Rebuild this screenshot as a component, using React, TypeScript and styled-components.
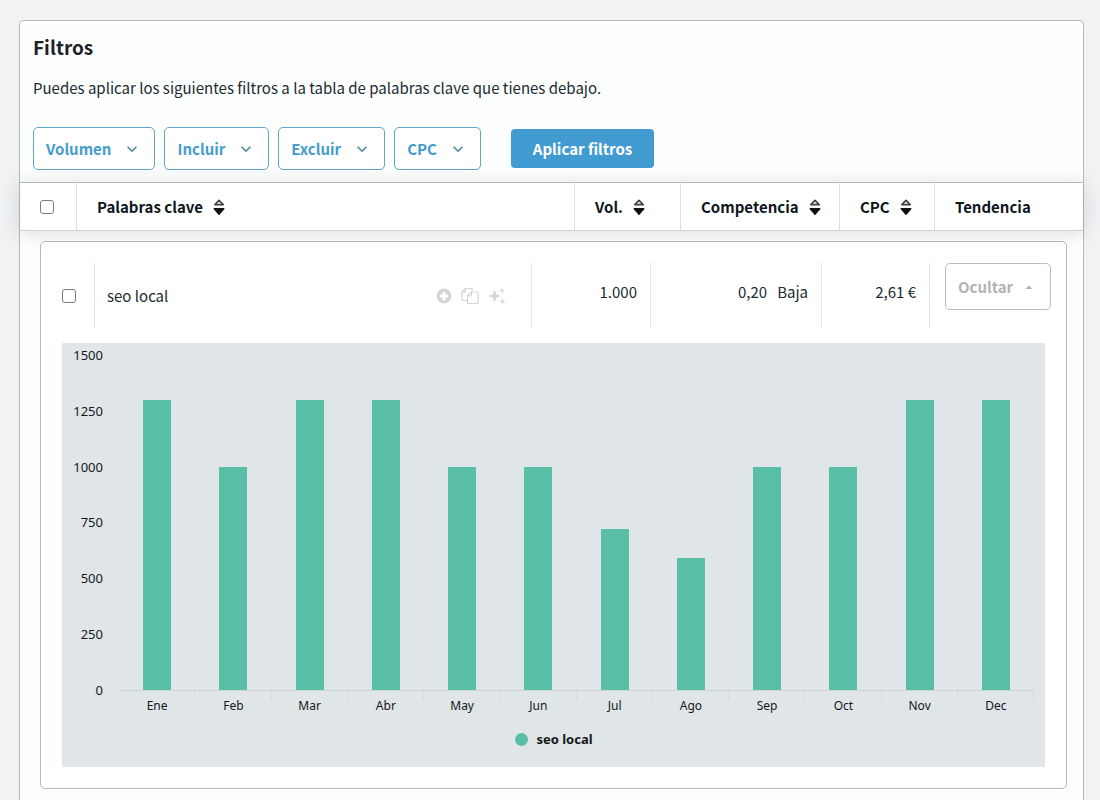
import React from "react";
import styled, { createGlobalStyle } from "styled-components";

const GlobalStyle = createGlobalStyle`
  *, *::before, *::after { box-sizing: border-box; }
  body {
    margin: 0;
    background: #f0f2f4;
    color: #202b31;
    font-family: "Noto Sans CJK SC", "Noto Sans", sans-serif;
    font-size: 15px;
    line-height: 24px;
  }
  button { font: inherit; cursor: pointer; }
`;

const Page = styled.main`
  display: flex;
  min-height: 100vh;
  padding: 20px 16px 0 19px;
`;

const Panel = styled.section`
  flex: 1;
  min-width: 0;
  background: #fdfefe;
  border: 1px solid #b4babd;
  border-bottom: 0;
  border-radius: 5px 5px 0 0;
`;

const Filters = styled.header`
  padding: 12px 13px;
`;

const Title = styled.h2`
  margin: 0;
  font-size: 19px;
  line-height: 28px;
  font-weight: 700;
  color: #1c2226;
`;

const Intro = styled.p`
  margin: 15px 0 27px;
`;

const FilterBar = styled.div`
  display: flex;
  flex-wrap: wrap;
  align-items: center;
  gap: 9px;
`;

const FilterButton = styled.button`
  display: flex;
  align-items: center;
  gap: 16px;
  height: 43px;
  padding: 0 17px 0 12px;
  border: 1px solid #62a5c8;
  border-radius: 5px;
  background: #fff;
  color: #459ccc;
  font-weight: 700;
`;

const ApplyButton = styled.button`
  height: 39px;
  margin-left: 21px;
  padding: 0 22px;
  border: 0;
  border-radius: 4px;
  background: #419bd0;
  color: #fff;
  font-weight: 700;
`;

const Keywords = styled.table`
  width: 100%;
  table-layout: fixed;
  border-collapse: separate;
  border-spacing: 0;
`;

const Head = styled.thead`
  position: relative;
  box-shadow: 0 2px 20px rgba(40, 50, 56, 0.16);
`;

const HeadCell = styled.th`
  height: 49px;
  padding: 0 0 0 20px;
  border-top: 1px solid #b4babd;
  border-bottom: 1px solid #cfd3d5;
  border-right: 1px solid #dde0e1;
  background: #fff;
  color: #0f171d;
  text-align: left;
  &:last-child { border-right: 0; }
`;

const SortButton = styled.button`
  display: flex;
  align-items: center;
  gap: 10px;
  padding: 0;
  border: 0;
  background: none;
  color: inherit;
  font-weight: 700;
`;

const Check = styled.input`
  appearance: none;
  display: block;
  width: 14px;
  height: 14px;
  margin: 0;
  border: 1px solid #767c80;
  border-radius: 3px;
  background: #fff;
  &:checked { background: #419bd0; }
`;

const CardCell = styled.td`
  padding: 10px 16px 10px 20px;
`;

const Card = styled.article`
  padding: 21px 15px 21px 21px;
  border: 1px solid #b4babd;
  border-radius: 5px;
  background: #fff;
`;

const Row = styled.tr`
  height: 65px;
`;

const Cell = styled.td`
  padding: 0;
  border-right: 1px solid #e6e9ea;
  vertical-align: middle;
`;

const NumberCell = styled(Cell)`
  padding: 17px 13px 0 0;
  text-align: right;
  vertical-align: top;
`;

const Level = styled.span`
  margin-left: 10px;
`;

const TrendCell = styled.td`
  padding: 0 0 0 15px;
  vertical-align: top;
`;

const KeywordLine = styled.div`
  display: flex;
  align-items: center;
  justify-content: space-between;
  padding: 0 25px 0 12px;
`;

const Actions = styled.div`
  display: flex;
  gap: 9px;
`;

const IconButton = styled.button`
  display: flex;
  padding: 0;
  border: 0;
  background: none;
  color: #d3d6d7;
`;

const HideButton = styled.button`
  display: flex;
  align-items: center;
  justify-content: space-between;
  width: 100%;
  height: 47px;
  padding: 0 17px 0 12px;
  border: 1px solid #b9bdbf;
  border-radius: 5px;
  background: #fff;
  color: #b1b4b5;
  font-weight: 700;
`;

const Chart = styled.figure`
  display: grid;
  grid-template-columns: 41px 1fr;
  column-gap: 16px;
  margin: 15px 6px 0 0;
  padding: 4px 11px 18px 0;
  background: #e0e5e7;
  color: #14181b;
  font-family: "Noto Sans", "Open Sans", sans-serif;
  font-size: 12px;
  line-height: 16px;
`;

const Scale = styled.div`
  display: flex;
  flex-direction: column;
  justify-content: space-between;
  height: 351px;
  text-align: right;
  font-size: 13px;
`;

const Plot = styled.div`
  padding-top: 8px;
`;

const Bars = styled.div`
  display: flex;
  height: 336px;
  border-bottom: 1px solid #ccd4da;
`;

const BarSlot = styled.div`
  display: flex;
  flex: 1;
  align-items: flex-end;
  justify-content: center;
`;

const Bar = styled.div`
  width: 28px;
  background: #58bfa6;
`;

const Months = styled.div`
  display: flex;
`;

const Month = styled.div`
  flex: 1;
  padding-top: 7px;
  text-align: center;
  background: linear-gradient(#d3dade, #d3dade) right top / 1px 9px no-repeat;
`;

const Legend = styled.figcaption`
  grid-column: 1 / -1;
  display: flex;
  align-items: center;
  justify-content: center;
  gap: 8px;
  margin-top: 15px;
  padding-left: 12px;
  font-size: 13px;
  line-height: 20px;
  font-weight: 700;
`;

const Dot = styled.span`
  width: 13px;
  height: 13px;
  border-radius: 50%;
  background: #58bfa6;
`;

const Chevron = () => (
  <svg width="10" height="10" viewBox="0 0 10 10" fill="none" stroke="#4f84a0" strokeWidth="1.6" aria-hidden="true">
    <path d="M.6 2.800L5 7.200l4.400-4.400" />
  </svg>
);

const SortIcon = () => (
  <svg width="12" height="18" viewBox="0 0 12 18" aria-hidden="true">
    <path d="M6 2.400L10.200 6.600H1.800z" fill="#fff" stroke="#3d4245" strokeWidth="1.600" strokeLinejoin="round" />
    <path d="M1.200 10.800h9.600L6 16.200z" fill="#0d1215" stroke="#0d1215" strokeWidth="1.400" strokeLinejoin="round" />
  </svg>
);

const PlusIcon = () => (
  <svg width="16" height="18" viewBox="0 0 16 18" aria-hidden="true">
    <circle cx="8" cy="9" r="7.4" fill="currentColor" />
    <path d="M8 6v6M5 9h6" stroke="#fff" strokeWidth="3.2" strokeLinecap="round" />
  </svg>
);

const CopyIcon = () => (
  <svg width="18" height="18" viewBox="0 0 18 18" fill="none" stroke="currentColor" strokeWidth="1.2" strokeLinejoin="round" aria-hidden="true">
    <path d="M6.5 13.5H1V5l3.500-3.500H11V5" />
    <path d="M1 5h3.500V1.500" />
    <path d="M6.500 16.500V9L10.500 5H17v11.500z" />
    <path d="M6.500 9h4V5" />
  </svg>
);

const SparkIcon = () => (
  <svg width="18" height="18" viewBox="0 0 18 18" fill="currentColor" aria-hidden="true">
    <path d="M6.500 2.800l1.800 4.400L12.800 9l-4.500 1.800-1.800 4.400-1.800-4.400L.2 9l4.500-1.800z" />
    <path d="M14 .8l.8 2.100 2.200.8-2.200.8L14 6.600l-.8-2.100-2.200-.8 2.200-.8z" />
    <path d="M14.500 11.500l.8 2.100 2.200.8-2.200.8-.8 2.100-.8-2.100-2.200-.8 2.200-.8z" />
  </svg>
);

const CaretUp = () => (
  <svg width="8" height="6" viewBox="0 0 8 6" aria-hidden="true">
    <path d="M.8 5L4 1.500 7.200 5z" fill="#a9adaf" />
  </svg>
);

const filters = ["Volumen", "Incluir", "Excluir", "CPC"];
const sortable = ["Palabras clave", "Vol.", "Competencia", "CPC"];
const scale = [1500, 1250, 1000, 750, 500, 250, 0];
const maxVolume = 1500;
const trend: [string, number][] = [
  ["Ene", 1300], ["Feb", 1000], ["Mar", 1300], ["Abr", 1300],
  ["May", 1000], ["Jun", 1000], ["Jul", 720], ["Ago", 590],
  ["Sep", 1000], ["Oct", 1000], ["Nov", 1300], ["Dec", 1300],
];

const TrendChart = ({ keyword }: { keyword: string }) => (
  <Chart>
    <Scale>
      {scale.map((n) => <span key={n}>{n}</span>)}
    </Scale>
    <Plot>
      <Bars>
        {trend.map(([month, value]) => (
          <BarSlot key={month}>
            <Bar style={{ height: `${(value / maxVolume) * 100}%` }} />
          </BarSlot>
        ))}
      </Bars>
      <Months>
        {trend.map(([month]) => <Month key={month}>{month}</Month>)}
      </Months>
    </Plot>
    <Legend><Dot />{keyword}</Legend>
  </Chart>
);

export default function App() {
  return (
    <>
      <GlobalStyle />
      <Page>
        <Panel>
          <Filters>
            <Title>Filtros</Title>
            <Intro>Puedes aplicar los siguientes filtros a la tabla de palabras clave que tienes debajo.</Intro>
            <FilterBar>
              {filters.map((name) => (
                <FilterButton key={name} type="button" aria-haspopup="true">
                  {name}
                  <Chevron />
                </FilterButton>
              ))}
              <ApplyButton type="button">Aplicar filtros</ApplyButton>
            </FilterBar>
          </Filters>
          <Keywords>
            <colgroup>
              <col width="57" />
              <col />
              <col width="106" />
              <col width="159" />
              <col width="95" />
              <col width="148" />
            </colgroup>
            <Head>
              <tr>
                <HeadCell scope="col"><Check type="checkbox" aria-label="Seleccionar todo" /></HeadCell>
                {sortable.map((name) => (
                  <HeadCell key={name} scope="col">
                    <SortButton type="button">{name}<SortIcon /></SortButton>
                  </HeadCell>
                ))}
                <HeadCell scope="col">Tendencia</HeadCell>
              </tr>
            </Head>
            <tbody>
              <tr>
                <CardCell colSpan={6}>
                  <Card>
                    <Keywords>
                      <colgroup>
                        <col width="33" />
                        <col />
                        <col width="119" />
                        <col width="171" />
                        <col width="108" />
                        <col width="121" />
                      </colgroup>
                      <tbody>
                        <Row>
                          <Cell><Check type="checkbox" id="kw-seo-local" /></Cell>
                          <Cell>
                            <KeywordLine>
                              <label htmlFor="kw-seo-local">seo local</label>
                              <Actions>
                                <IconButton type="button" aria-label="Añadir"><PlusIcon /></IconButton>
                                <IconButton type="button" aria-label="Copiar"><CopyIcon /></IconButton>
                                <IconButton type="button" aria-label="Generar ideas"><SparkIcon /></IconButton>
                              </Actions>
                            </KeywordLine>
                          </Cell>
                          <NumberCell>1.000</NumberCell>
                          <NumberCell>0,20<Level>Baja</Level></NumberCell>
                          <NumberCell>2,61 €</NumberCell>
                          <TrendCell>
                            <HideButton type="button" aria-expanded="true">Ocultar<CaretUp /></HideButton>
                          </TrendCell>
                        </Row>
                      </tbody>
                    </Keywords>
                    <TrendChart keyword="seo local" />
                  </Card>
                </CardCell>
              </tr>
            </tbody>
          </Keywords>
        </Panel>
      </Page>
    </>
  );
}
